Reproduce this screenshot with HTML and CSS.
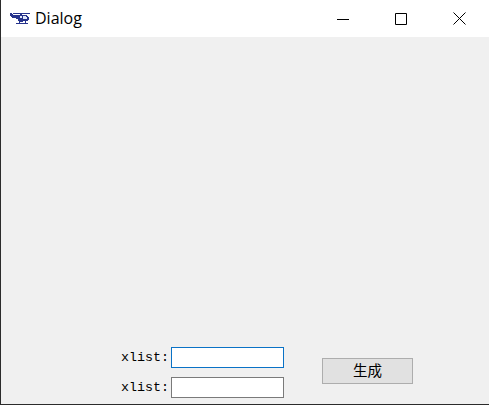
FILE: index.html
```html
<!DOCTYPE html>
<html lang="zh">
<head>
<meta charset="utf-8">
<title>Dialog</title>
<link rel="stylesheet" href="styles.css">
</head>
<body>
<div class="window">
  <header class="titlebar">
    <svg class="app-icon" width="20" height="12" viewBox="0 0 20 12">
      <path class="ink" d="M3 1h17v1H3z"/>
      <path class="ink" d="M10 2h2v1h-2z"/>
      <path class="ink" d="M0 1h2v1h1v1h5v-0h9v1h1v1h1v3h-1v1h-5v1h-3v-1h-2v-2h-2v-1h-4v-1h-1v-1h-1z"/>
      <path class="glass" d="M13 4h3v1h1v2h-4z"/>
      <path class="glass" d="M10 4h2v2h-2z"/>
      <path class="ink" d="M6 11h12v1H6z"/>
      <path class="ink" d="M9 9h1v2H9zM15 9h1v2h-1z"/>
    </svg>
    <span class="title">Dialog</span>
    <div class="controls">
      <button class="ctl" aria-label="最小化"><svg width="12" height="12" viewBox="0 0 12 12"><path class="stroke" d="M0 6.5h12"/></svg></button>
      <button class="ctl" aria-label="最大化"><svg width="12" height="12" viewBox="0 0 12 12"><path class="stroke" d="M.5.5h11v11H.5z"/></svg></button>
      <button class="ctl" aria-label="关闭"><svg width="13" height="13" viewBox="0 0 13 13"><path class="stroke" d="M.5.5l12 12M12.5.5l-12 12"/></svg></button>
    </div>
  </header>
  <main class="client">
    <div class="form">
      <div class="fields">
        <label class="row"><span class="label">xlist:</span><input class="field field-focus" type="text"></label>
        <label class="row"><span class="label">xlist:</span><input class="field" type="text"></label>
      </div>
      <button class="action">生成</button>
    </div>
  </main>
</div>
</body>
</html>
```
FILE: styles.css
```css
* { box-sizing: border-box; }
html, body { margin: 0; height: 100%; }
body { background: #f0f0f0; overflow: hidden; }
.window {
  width: 489px;
  height: 405px;
  display: flex;
  flex-direction: column;
  border-left: 1px solid #2b2b2b;
  border-bottom: 1px solid #2b2b2b;
}
.titlebar {
  height: 37px;
  flex: none;
  background: #fff;
  display: flex;
  align-items: center;
  padding: 0 1px 0 9px;
}
.app-icon { flex: none; margin-right: 5px; margin-top: -1px; }
.ink { fill: #26338c; }
.glass { fill: #dfe6f8; }
.title {
  font-family: "Open Sans", "Noto Sans", sans-serif;
  font-size: 16px;
  color: #000;
  position: relative;
  top: -1px;
}
.controls { margin-left: auto; display: flex; height: 100%; }
.ctl {
  width: 58px;
  height: 100%;
  padding: 0;
  border: 0;
  background: none;
  display: flex;
  align-items: center;
  justify-content: center;
}
.ctl svg { display: block; }
.stroke { fill: none; stroke: #000; stroke-width: 1; }
.client {
  flex: 1;
  background: #f0f0f0;
  display: flex;
  flex-direction: column;
  justify-content: flex-end;
}
.form {
  display: flex;
  align-items: center;
  padding: 0 0 6px 120px;
}
.fields { display: flex; flex-direction: column; gap: 9px; }
.row { display: flex; align-items: center; gap: 2px; }
.label {
  font-family: "Liberation Mono", "Noto Sans CJK SC", monospace;
  font-size: 13.33px;
  color: #000;
  width: 48px;
}
.field {
  width: 113px;
  height: 21px;
  padding: 0 2px;
  background: #fff;
  border: 1px solid #7a7a7a;
  border-radius: 0;
  outline: 0;
  margin: 0;
}
.field-focus { border-color: #0a72c6; }
.action {
  width: 91px;
  height: 26px;
  margin: 0 0 4px 38px;
  padding: 0;
  background: #e1e1e1;
  border: 1px solid #adadad;
  border-radius: 0;
  font-family: "Noto Sans CJK SC", sans-serif;
  font-size: 14.5px;
  line-height: 1;
  color: #000;
}
```
